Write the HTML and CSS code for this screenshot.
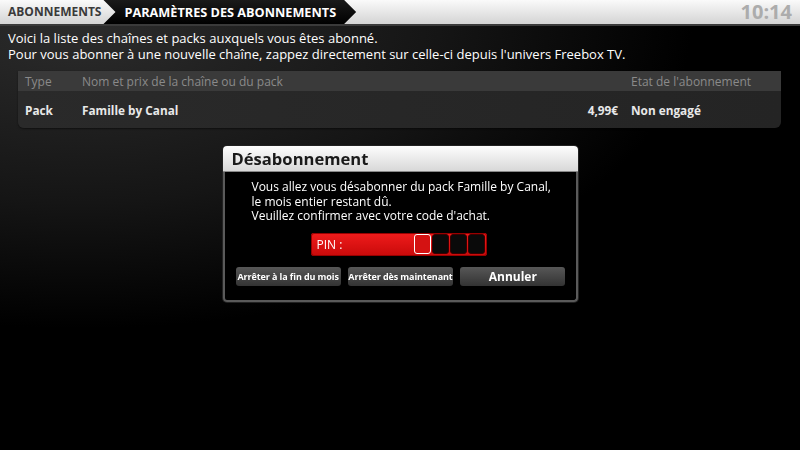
FILE: index.html
```html
<!DOCTYPE html>
<html lang="fr">
<head>
    <meta charset="UTF-8">
    <title>Paramètres des abonnements</title>
    <link rel="stylesheet" href="styles.css">
</head>
<body>
    <header class="topbar">
        <nav class="crumbs">
            <span class="crumb">ABONNEMENTS</span>
            <span class="crumb crumb-current">PARAMÈTRES DES ABONNEMENTS</span>
        </nav>
        <div class="clock">10:14</div>
    </header>

    <main class="content">
        <p class="intro">
            Voici la liste des chaînes et packs auxquels vous êtes abonné.<br>
            Pour vous abonner à une nouvelle chaîne, zappez directement sur celle-ci depuis l'univers Freebox TV.
        </p>

        <div class="subs">
            <div class="subs-row subs-head">
                <span class="col-type">Type</span>
                <span class="col-name">Nom et prix de la chaîne ou du pack</span>
                <span class="col-price"></span>
                <span class="col-state">Etat de l'abonnement</span>
            </div>
            <div class="subs-row subs-item">
                <span class="col-type">Pack</span>
                <span class="col-name">Famille by Canal</span>
                <span class="col-price">4,99€</span>
                <span class="col-state">Non engagé</span>
            </div>
        </div>
    </main>

    <div class="overlay">
        <div class="dialog">
            <div class="dialog-title">Désabonnement</div>
            <div class="dialog-body">
                <p class="dialog-text">
                    Vous allez vous désabonner du pack Famille by Canal,<br>
                    le mois entier restant dû.<br>
                    Veuillez confirmer avec votre code d'achat.
                </p>
                <div class="pin">
                    <span class="pin-label">PIN :</span>
                    <div class="pin-digits">
                        <span class="digit digit-active"></span>
                        <span class="digit"></span>
                        <span class="digit"></span>
                        <span class="digit"></span>
                    </div>
                </div>
                <div class="actions">
                    <button class="btn btn-small">Arrêter à la fin du mois</button>
                    <button class="btn btn-small">Arrêter dès maintenant</button>
                    <button class="btn btn-cancel">Annuler</button>
                </div>
            </div>
        </div>
    </div>
</body>
</html>
```

FILE: styles.css
```css
* {
    margin: 0;
    padding: 0;
    box-sizing: border-box;
}

html, body {
    height: 100%;
}

body {
    font-family: 'Open Sans', 'DejaVu Sans', sans-serif;
    color: #fff;
    background: radial-gradient(ellipse 90% 80% at 10% 5%, #2c2c2c 0%, #151515 50%, #000 85%);
    background-color: #000;
    overflow: hidden;
}

/* top bar */
.topbar {
    height: 26px;
    display: flex;
    justify-content: space-between;
    align-items: stretch;
    background: linear-gradient(#fafafa, #d4d4d4);
    border-bottom: 2px solid #3a3a3a;
}

.crumbs {
    display: flex;
}

.crumb {
    font-size: 12px;
    font-weight: 700;
    color: #3a3a3a;
    line-height: 24px;
    padding: 0 8px;
}

.crumb-current {
    font-size: 12.7px;
    color: #fff;
    background: linear-gradient(#1a1a1a, #000);
    margin-left: -6px;
    padding: 0 20px 0 21px;
    clip-path: polygon(0 0, calc(100% - 12px) 0, 100% 50%, calc(100% - 12px) 100%, 0 100%, 12px 50%);
}

.clock {
    font-size: 20px;
    font-weight: 700;
    color: #acacac;
    line-height: 24px;
    padding-right: 8px;
}

/* list */
.content {
    padding: 4px 19px 0 8px;
}

.intro {
    font-size: 13px;
    line-height: 16px;
    margin-bottom: 9px;
}

.subs {
    margin-left: 10px;
    border-radius: 0 0 6px 6px;
    background: linear-gradient(90deg, #2a2a2a, #242424);
    box-shadow: 0 1px 2px rgba(0,0,0,0.5);
}

.subs-row {
    display: grid;
    grid-template-columns: 57px 1fr 90px 150px;
    align-items: center;
    padding-left: 7px;
}

.subs-head {
    height: 20px;
    background: #3a3a3a;
    color: #8a8a8a;
    font-size: 12px;
}

.subs-item {
    height: 37px;
    font-size: 11.8px;
    font-weight: 700;
    color: #e8e8e8;
}

.col-price {
    text-align: right;
    padding-right: 13px;
}

/* dialog */
.overlay {
    position: fixed;
    inset: 0;
    display: flex;
    align-items: center;
    justify-content: center;
    padding-bottom: 2px;
}

.dialog {
    width: 355px;
    border-radius: 4px;
    box-shadow: 0 0 0 1px #222;
}

.dialog-title {
    height: 26px;
    padding-left: 9px;
    font-size: 16.6px;
    font-weight: 700;
    color: #1a1a1a;
    line-height: 26px;
    background: linear-gradient(#fdfdfd, #d8d8d8);
    border-radius: 4px 4px 0 0;
    border-bottom: 1px solid #888;
}

.dialog-body {
    background: #000;
    border: 2px solid #5a5a5a;
    border-top: none;
    border-radius: 0 0 4px 4px;
    padding: 8px 10px 14px;
}

.dialog-text {
    font-size: 12px;
    line-height: 14.5px;
    padding-left: 17px;
    margin-bottom: 9px;
}

.pin {
    width: 176px;
    height: 23px;
    margin: 0 0 11px 76px;
    display: flex;
    align-items: center;
    justify-content: space-between;
    padding: 0 2px 0 6px;
    border-radius: 3px;
    background: linear-gradient(#f01c1c, #c80a0a);
    box-shadow: inset 0 0 0 1px #900;
}

.pin-label {
    font-size: 12px;
    color: #fff;
}

.pin-digits {
    display: flex;
    gap: 1px;
}

.digit {
    width: 17px;
    height: 20px;
    border-radius: 3px;
    background: #0a0a0a;
    border: 1px solid #3a0000;
}

.digit-active {
    background: #d41212;
    border: 1px solid #fff;
}

.actions {
    display: flex;
    gap: 7px;
    padding-left: 1px;
}

.btn {
    width: 106px;
    height: 19px;
    border: none;
    border-radius: 3px;
    background: linear-gradient(#575757, #333);
    color: #fff;
    font-family: inherit;
    font-weight: 700;
    white-space: nowrap;
    box-shadow: 0 1px 1px rgba(0,0,0,0.6);
}

.btn-small {
    font-size: 9px;
    letter-spacing: -0.1px;
}

.btn-cancel {
    font-size: 12px;
}
```
